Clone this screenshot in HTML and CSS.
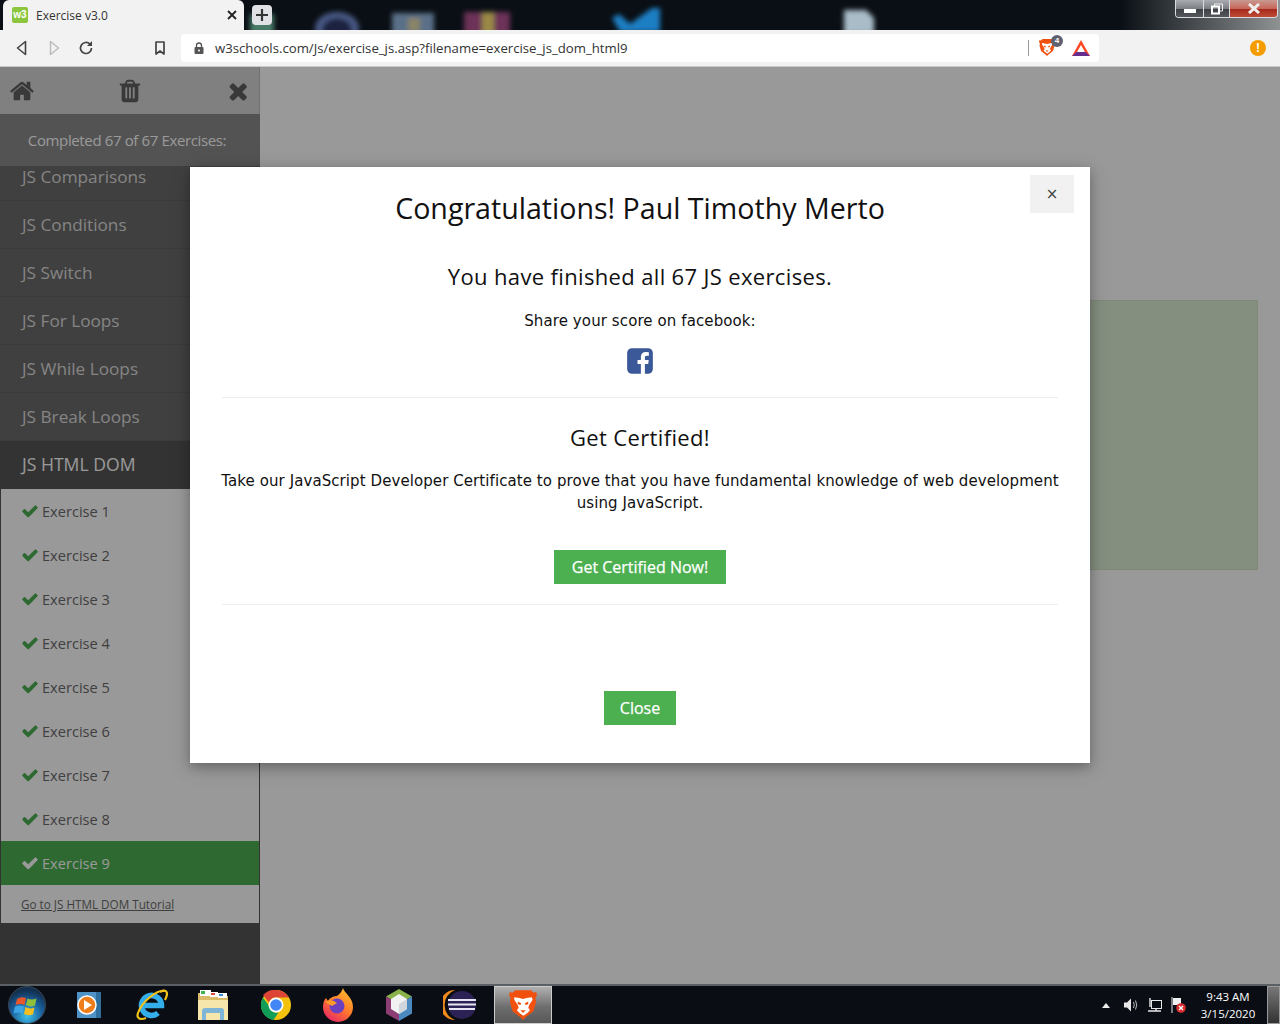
FILE: index.html
```html
<!DOCTYPE html>
<html lang="en">

<head>
    <meta charset="UTF-8">
    <title>Exercise v3.0</title>
    <link rel="stylesheet" href="styles.css">
</head>

<body>
    <svg class="defs" width="0" height="0">
        <symbol id="fa-check" viewBox="0 0 1792 1792"><path d="M1671 566q0 40-28 68l-724 724-136 136q-28 28-68 28t-68-28l-136-136-362-362q-28-28-28-68t28-68l136-136q28-28 68-28t68 28l294 295 656-657q28-28 68-28t68 28l136 136q28 28 28 68z"/></symbol>
        <symbol id="fa-times" viewBox="0 0 1792 1792"><path d="M1298 1322q0 40-28 68l-136 136q-28 28-68 28t-68-28l-294-294-294 294q-28 28-68 28t-68-28l-136-136q-28-28-28-68t28-68l294-294-294-294q-28-28-28-68t28-68l136-136q28-28 68-28t68 28l294 294 294-294q28-28 68-28t68 28l136 136q28 28 28 68t-28 68l-294 294 294 294q28 28 28 68z"/></symbol>
        <symbol id="fa-home" viewBox="0 0 1792 1792"><path d="M1472 992v480q0 26-19 45t-45 19h-384v-384h-256v384h-384q-26 0-45-19t-19-45v-480q0-1 .5-3t.5-3l575-474 575 474q1 2 1 6zm223-69l-62 74q-8 9-21 11h-3q-13 0-21-7l-692-577-692 577q-12 8-24 7-13-2-21-11l-62-74q-8-10-7-23.500t11-21.500l719-599q32-26 76-26t76 26l244 204v-195q0-14 9-23t23-9h192q14 0 23 9t9 23v408l219 182q10 8 11 21.500t-7 23.500z"/></symbol>
        <symbol id="fa-trash" viewBox="0 0 1792 1792"><path d="M704 1376v-704q0-14-9-23t-23-9h-64q-14 0-23 9t-9 23v704q0 14 9 23t23 9h64q14 0 23-9t9-23zm256 0v-704q0-14-9-23t-23-9h-64q-14 0-23 9t-9 23v704q0 14 9 23t23 9h64q14 0 23-9t9-23zm256 0v-704q0-14-9-23t-23-9h-64q-14 0-23 9t-9 23v704q0 14 9 23t23 9h64q14 0 23-9t9-23zm-544-992h448l-48-117q-7-9-17-11h-317q-10 2-17 11zm928 32v64q0 14-9 23t-23 9h-96v948q0 83-47 143.500t-113 60.500h-832q-66 0-113-58.500t-47-141.500v-952h-96q-14 0-23-9t-9-23v-64q0-14 9-23t23-9h309l70-167q15-37 54-63t79-26h320q40 0 79 26t54 63l70 167h309q14 0 23 9t9 23z"/></symbol>
        <symbol id="fa-facebook" viewBox="0 0 1792 1792"><path d="M1376 128q119 0 203.500 84.500t84.500 203.500v960q0 119-84.500 203.500t-203.500 84.500h-188v-595h199l30-232h-229v-148q0-56 23.500-84t91.500-28l122-1v-207q-63-9-178-9-136 0-217.500 80t-81.500 226v171h-200v232h200v595h-532q-119 0-203.500-84.500t-84.500-203.500v-960q0-119 84.500-203.500t203.500-84.500h960z"/></symbol>
        <symbol id="brave" viewBox="0 0 32 36">
            <path fill="#f1500f" d="M7 1h18l3 3 3-1 1 4-2 3 1 4-3 11-9 7-3 3-3-3-9-7-3-11 1-4-2-3 1-4 3 1z"/>
            <path fill="#fff" d="M6 9l6 1 4 1 4-1 6-1 1 3-4 6-1 3 2 3-3 3-4 3-1 0-4-3-3-3 2-3-1-3-4-6z"/>
            <path fill="#f1500f" d="M10 14l4 2-1 2-3-1zM22 14l-4 2 1 2 3-1zM13 24h6l-3 3z"/>
        </symbol>
    </svg>

    <header class="browser">
        <div class="tab-strip">
            <svg class="desktop-blur" width="1280" height="30">
                <defs>
                    <filter id="blur"><feGaussianBlur stdDeviation="2.500"/></filter>
                    <linearGradient id="glass"><stop offset="0" stop-color="#8a8f90" stop-opacity="0"/><stop offset="1" stop-color="#8f9293"/></linearGradient>
                </defs>
                <rect x="1120" width="160" height="30" fill="url(#glass)"/>
                <g filter="url(#blur)">
                    <rect x="250" y="14" width="24" height="20" fill="#4a7a68"/>
                    <ellipse cx="337" cy="28" rx="22" ry="16" fill="#4a5a86"/>
                    <ellipse cx="337" cy="30" rx="15" ry="12" fill="#1b2240"/>
                    <rect x="392" y="13" width="42" height="24" fill="#5a6f88"/>
                    <rect x="408" y="18" width="12" height="14" fill="#8a8466"/>
                    <rect x="464" y="12" width="46" height="24" fill="#6c3058"/>
                    <rect x="482" y="12" width="12" height="22" fill="#9a8a44"/>
                    <path d="M612 18l7-4 11 10 22-16h8v24h-40z" fill="#1f7fc4"/>
                    <path d="M844 10h22l8 8v16h-30z" fill="#a9bcc8"/>
                </g>
            </svg>
            <div class="tab">
                <span class="tab-logo">w3</span>
                <span class="tab-title">Exercise v3.0</span>
                <svg class="tab-close" width="10" height="10" viewBox="0 0 10 10"><path d="M1 1l8 8M9 1l-8 8" stroke="#222" stroke-width="1.8"/></svg>
            </div>
            <div class="new-tab">
                <svg width="14" height="14" viewBox="0 0 14 14"><path d="M7 1v12M1 7h12" stroke="#333" stroke-width="2.2"/></svg>
            </div>
            <div class="window-buttons">
                <span class="win-btn win-min"><i></i></span>
                <span class="win-btn win-max">
                    <svg width="12" height="12" viewBox="0 0 12 12"><path d="M3.500 3V1h8v7H9" fill="none" stroke="#eee"/><rect x="1" y="3.500" width="7" height="7" fill="none" stroke="#fff" stroke-width="2"/></svg>
                </span>
                <span class="win-btn win-close">
                    <svg width="14" height="11" viewBox="0 0 14 11"><path d="M2 1l10 9M12 1L2 10" stroke="#eee" stroke-width="3"/></svg>
                </span>
            </div>
        </div>
        <div class="toolbar">
            <div class="nav-icons">
                <svg class="nav-icon" width="16" height="16" viewBox="0 0 16 16"><path d="M11.500 1.500v13L3.500 8z" fill="none" stroke="#444" stroke-width="1.600" stroke-linejoin="round"/></svg>
                <svg class="nav-icon" width="16" height="16" viewBox="0 0 16 16"><path d="M4.500 1.500v13L12.500 8z" fill="none" stroke="#bbb" stroke-width="1.400" stroke-linejoin="round"/></svg>
                <svg class="nav-icon" width="16" height="16" viewBox="0 0 16 16"><path d="M13.500 8a5.500 5.500 0 1 1-1.600-3.900" fill="none" stroke="#444" stroke-width="1.700"/><path d="M14 1v5H9z" fill="#444"/></svg>
                <svg class="nav-icon bookmark" width="16" height="16" viewBox="0 0 16 16"><path d="M4 2h8v12l-4-3-4 3z" fill="none" stroke="#444" stroke-width="1.700" stroke-linejoin="round"/></svg>
            </div>
            <div class="address-bar">
                <svg width="10" height="12" viewBox="0 0 10 12"><path d="M2.500 5V3.500a2.500 2.500 0 0 1 5 0V5" fill="none" stroke="#555" stroke-width="1.300"/><rect x="0.500" y="5" width="9" height="7" rx="1" fill="#555"/><circle cx="5" cy="8.500" r="1" fill="#fff"/></svg>
                <span class="url">w3schools.com/Js/exercise_js.asp?filename=exercise_js_dom_html9</span>
                <span class="address-sep"></span>
                <span class="shield">
                    <svg width="16" height="19"><use href="#brave"/></svg>
                    <b class="shield-count">4</b>
                </span>
                <svg class="bat" width="18" height="16" viewBox="0 0 18 16">
                    <path d="M9 0l9 16H0z" fill="#ff4724"/>
                    <path d="M9 8l9 8H0z" fill="#662d91"/>
                    <path d="M9 5l4 7H5z" fill="#fff"/>
                </svg>
            </div>
            <span class="update-dot">!</span>
        </div>
    </header>

    <div class="page">
        <aside class="sidebar">
            <div class="side-tools">
                <svg class="side-tool" width="26" height="26"><use href="#fa-home"/></svg>
                <svg class="side-tool" width="26" height="26"><use href="#fa-trash"/></svg>
                <svg class="side-tool close-tool" width="26" height="26"><use href="#fa-times"/></svg>
            </div>
            <div class="side-count">Completed 67 of 67 Exercises:</div>
            <ul class="chapters">
                <li class="chapter cut">JS Comparisons</li>
                <li class="chapter">JS Conditions</li>
                <li class="chapter">JS Switch</li>
                <li class="chapter">JS For Loops</li>
                <li class="chapter">JS While Loops</li>
                <li class="chapter">JS Break Loops</li>
                <li class="chapter open">JS HTML DOM</li>
            </ul>
            <ul class="exercises">
                <li class="exercise"><svg class="tick" width="18" height="18"><use href="#fa-check"/></svg>Exercise 1</li>
                <li class="exercise"><svg class="tick" width="18" height="18"><use href="#fa-check"/></svg>Exercise 2</li>
                <li class="exercise"><svg class="tick" width="18" height="18"><use href="#fa-check"/></svg>Exercise 3</li>
                <li class="exercise"><svg class="tick" width="18" height="18"><use href="#fa-check"/></svg>Exercise 4</li>
                <li class="exercise"><svg class="tick" width="18" height="18"><use href="#fa-check"/></svg>Exercise 5</li>
                <li class="exercise"><svg class="tick" width="18" height="18"><use href="#fa-check"/></svg>Exercise 6</li>
                <li class="exercise"><svg class="tick" width="18" height="18"><use href="#fa-check"/></svg>Exercise 7</li>
                <li class="exercise"><svg class="tick" width="18" height="18"><use href="#fa-check"/></svg>Exercise 8</li>
                <li class="exercise current"><svg class="tick" width="18" height="18"><use href="#fa-check"/></svg>Exercise 9</li>
                <li class="tutorial"><a href="#">Go to JS HTML DOM Tutorial</a></li>
            </ul>
        </aside>
        <main class="content">
            <div class="answer-box"></div>
        </main>

        <div class="overlay"></div>

        <div class="modal">
            <button class="modal-close">×</button>
            <h1>Congratulations! Paul Timothy Merto</h1>
            <h2>You have finished all 67 JS exercises.</h2>
            <p class="share">Share your score on facebook:</p>
            <svg class="fb" width="30" height="30"><use href="#fa-facebook"/></svg>
            <hr>
            <h3>Get Certified!</h3>
            <p class="cert-text">Take our JavaScript Developer Certificate to prove that you have fundamental knowledge of web development using JavaScript.</p>
            <a class="green-btn cert-btn" href="#">Get Certified Now!</a>
            <hr class="second">
            <a class="green-btn close-btn" href="#">Close</a>
        </div>
    </div>

    <footer class="taskbar">
        <svg class="start-orb" width="40" height="40" viewBox="0 0 40 40">
            <defs>
                <radialGradient id="orb" cx="50%" cy="80%" r="70%"><stop offset="0" stop-color="#3fc0e8"/><stop offset="0.6" stop-color="#1a5f9c"/><stop offset="1" stop-color="#12304f"/></radialGradient>
            </defs>
            <circle cx="20" cy="20" r="18.500" fill="url(#orb)" stroke="#3a4450"/>
            <path d="M10 14q4-3 9-1l-1.500 7q-4-2-9 0z" fill="#e8562a"/>
            <path d="M20.500 13.500q4 2 9 0l-1.500 7q-5 2-9-.5z" fill="#8fc03c"/>
            <path d="M8 21.500q4-2 9 0l-1.500 7q-4-2-9 0z" fill="#3ca5e6"/>
            <path d="M18.500 22q4 2.500 9 .5l-1.500 7q-5 1.500-9-.5z" fill="#f5c01f"/>
        </svg>
        <svg class="task-icon wmp" width="28" height="30" viewBox="0 0 28 30">
            <rect x="2" y="2" width="24" height="26" fill="#4f93c6"/>
            <rect x="21" y="2" width="5" height="26" fill="#2e6f9e"/>
            <circle cx="12" cy="15" r="9" fill="#ef7d1a" stroke="#fff" stroke-width="1.500"/>
            <path d="M9 10l8 5-8 5z" fill="#fff"/>
        </svg>
        <svg class="task-icon ie" width="34" height="36" viewBox="0 0 34 36">
            <path d="M10 18.500H27.500A10 10 0 1 0 24 26" fill="none" stroke="#33aeea" stroke-width="5.500"/>
            <path d="M31 4C24 2 8 14 4 26c-2 6 3 7 8 5" fill="none" stroke="#f2c21a" stroke-width="2.200"/>
            <path d="M26 5c4-2 7-2 7 2 0 2-1 4-2 6" fill="none" stroke="#f2c21a" stroke-width="2.200"/>
        </svg>
        <svg class="task-icon explorer" width="34" height="32" viewBox="0 0 34 32">
            <path d="M2 4h12l2 3h16v24H2z" fill="#d9bb6a"/>
            <rect x="4" y="1" width="11" height="6" fill="#fff"/>
            <rect x="5" y="2" width="4" height="3" fill="#3cb54a"/>
            <rect x="14" y="3" width="8" height="5" fill="#fff"/>
            <rect x="15" y="4" width="4" height="2" fill="#d94a38"/>
            <rect x="22" y="4" width="9" height="5" fill="#fff"/>
            <rect x="23" y="5" width="4" height="2" fill="#3a8ad8"/>
            <path d="M2 11h30v20H2z" fill="#f7e6ac"/>
            <path d="M6 31V22q0-3 3-3h16q3 0 3 3v9h-4v-7H10v7z" fill="#7fb6d8"/>
        </svg>
        <svg class="task-icon chrome" width="32" height="32" viewBox="0 0 32 32">
            <circle cx="16" cy="16" r="15" fill="#f4c20d"/>
            <path d="M16 1a15 15 0 0 1 13 7.500H16a7.500 7.500 0 0 0-7 5L3 6a15 15 0 0 1 13-5z" fill="#db4437"/>
            <path d="M3 8.500l6.500 9a7.500 7.500 0 0 0 9 6l-5 7.500A15 15 0 0 1 3 8.500z" fill="#0f9d58"/>
            <circle cx="16" cy="16" r="7.500" fill="#fff"/>
            <circle cx="16" cy="16" r="5.800" fill="#4285f4"/>
        </svg>
        <svg class="task-icon firefox" width="32" height="34" viewBox="0 0 32 34">
            <defs><linearGradient id="fox" x1="0.800" y1="0" x2="0.200" y2="1"><stop offset="0" stop-color="#ffbf2e"/><stop offset="0.500" stop-color="#ff7a2a"/><stop offset="1" stop-color="#e6236a"/></linearGradient></defs>
            <path d="M21 0c1 5 10 9 10 19a15 15 0 0 1-30 0c0-4 1-7 3-9l2 3c2-4 7-5 9-5 3-2 5-5 6-8z" fill="url(#fox)"/>
            <circle cx="15" cy="18" r="7.500" fill="#6a3fc0"/>
            <path d="M3 14c4-3 9-2 12 1l-5 3z" fill="#ff9a2a"/>
        </svg>
        <svg class="task-icon netbeans" width="30" height="34" viewBox="0 0 30 34">
            <path d="M15 1l13 7.500L15 16 2 8.500z" fill="#8ab24a"/>
            <path d="M2 8.500L15 16v17L2 25.500z" fill="#8c3e74"/>
            <path d="M28 8.500L15 16v17l13-7.500z" fill="#4a8ac0"/>
            <path d="M15 6l8 5v10l-8 5-8-5V11z" fill="#f2f2f2"/>
            <path d="M15 16l8-5v10l-8 5z" fill="#cfd6dc"/>
        </svg>
        <svg class="task-icon eclipse" width="34" height="32" viewBox="0 0 34 32">
            <path d="M12 1a15 15 0 0 0 0 30A16 16 0 0 1 12 1z" fill="#f08a1d"/>
            <circle cx="19" cy="16" r="14" fill="#2c2255"/>
            <path d="M5 11h28M5 15.500h28M6 20h26" stroke="#e8e6f2" stroke-width="1.800"/>
        </svg>
        <div class="task-active">
            <svg width="28" height="32"><use href="#brave"/></svg>
        </div>

        <div class="tray">
            <span class="tray-arrow"></span>
            <svg class="tray-speaker" width="16" height="16" viewBox="0 0 16 16"><path d="M1 5.500h3l4-4v13l-4-4H1z" fill="#e8e8e8"/><path d="M10.500 5q1.500 3 0 6M12.500 3.500q2.500 4.500 0 9" fill="none" stroke="#bbb"/></svg>
            <svg class="tray-net" width="16" height="16" viewBox="0 0 16 16"><rect x="4.500" y="3.500" width="10" height="8" fill="none" stroke="#e8e8e8"/><path d="M3 1v9M1 14h13M9 12v2" stroke="#e8e8e8" stroke-width="1.400"/></svg>
            <svg class="tray-flag" width="16" height="16" viewBox="0 0 16 16"><path d="M2 0v16" stroke="#e8e8e8"/><path d="M3 1h8v7H3z" fill="#f0f0f0"/><circle cx="11" cy="11" r="4.800" fill="#d92b2b"/><path d="M9 9l4 4M13 9l-4 4" stroke="#fff" stroke-width="1.400"/></svg>
            <div class="clock">
                <span>9:43 AM</span>
                <span>3/15/2020</span>
            </div>
            <span class="show-desktop"></span>
        </div>
    </footer>
</body>

</html>
```

FILE: styles.css
```css
* {
    box-sizing: border-box;
}

html,
body {
    margin: 0;
    height: 100%;
}

body {
    display: flex;
    flex-direction: column;
    height: 1024px;
    overflow: hidden;
    font-family: "Open Sans", sans-serif;
    background: #fff;
}

.defs {
    position: absolute;
}

/* browser chrome */
.browser {
    flex: none;
    height: 67px;
}

.tab-strip {
    position: relative;
    display: flex;
    height: 30px;
    padding-left: 3px;
    background: #0a0f15;
    overflow: hidden;
}

.desktop-blur {
    position: absolute;
    left: 0;
    top: 0;
}

.tab {
    position: relative;
    display: flex;
    align-items: center;
    width: 241px;
    height: 30px;
    padding: 0 7px 0 9px;
    background: #f2f2f2;
    border-radius: 6px 6px 0 0;
}

.tab-logo {
    width: 16px;
    height: 16px;
    margin-right: 8px;
    background: #8cc63f;
    border-radius: 2px;
    color: #fff;
    font: bold 10px/15px "Liberation Sans", sans-serif;
    text-align: center;
}

.tab-title {
    flex: 1;
    font-size: 12px;
    color: #333;
}

.new-tab {
    position: relative;
    display: flex;
    align-items: center;
    justify-content: center;
    width: 20px;
    height: 20px;
    margin: 5px 0 0 8px;
    background: #dfe1e5;
    border-radius: 4px;
}

.window-buttons {
    position: absolute;
    top: 0;
    right: 2px;
    display: flex;
    height: 18px;
    border: 1px solid #d8dcdf;
    border-top: none;
    border-radius: 0 0 4px 4px;
    overflow: hidden;
}

.win-btn {
    display: flex;
    align-items: center;
    justify-content: center;
    height: 17px;
    background: linear-gradient(#a9adb1, #7c8084 50%, #3e4246 55%, #55595d);
    border-right: 1px solid #d8dcdf;
}

.win-min {
    width: 28px;
}

.win-min i {
    width: 12px;
    height: 4px;
    margin-top: 5px;
    background: #fff;
}

.win-max {
    width: 26px;
}

.win-close {
    width: 47px;
    border-right: none;
    background: linear-gradient(#c89a90, #c8655a 50%, #a52a1c 55%, #c04a36);
}

.toolbar {
    display: flex;
    align-items: center;
    height: 37px;
    padding: 0 14px 1px 14px;
    background: #f2f2f2;
    border-bottom: 1px solid #c9c9c9;
}

.nav-icons {
    display: flex;
    align-items: center;
    gap: 16px;
    width: 167px;
}

.bookmark {
    margin-left: 42px;
}

.address-bar {
    display: flex;
    align-items: center;
    width: 918px;
    height: 28px;
    padding: 0 9px 0 13px;
    background: #fff;
    border-radius: 4px;
}

.url {
    flex: 1;
    margin-left: 11px;
    font-size: 13.2px;
    color: #333;
    white-space: nowrap;
}

.address-sep {
    width: 1px;
    height: 16px;
    margin-right: 10px;
    background: #999;
}

.shield {
    position: relative;
    display: flex;
    margin-right: 17px;
}

.shield-count {
    position: absolute;
    left: 12px;
    top: -3px;
    width: 12px;
    height: 12px;
    background: #5f6070;
    border-radius: 50%;
    color: #fff;
    font: bold 8px/12px "Liberation Sans", sans-serif;
    text-align: center;
}

.update-dot {
    width: 16px;
    height: 16px;
    margin-left: auto;
    background: #f59c00;
    border-radius: 50%;
    color: #fff;
    font: bold 12px/16px "Liberation Sans", sans-serif;
    text-align: center;
}

/* page under the dialog */
.page {
    position: relative;
    flex: 1;
    display: flex;
    min-height: 0;
    background: #fff;
}

.sidebar {
    display: flex;
    flex-direction: column;
    width: 260px;
    background: #555;
}

.side-tools {
    display: flex;
    align-items: center;
    gap: 82px;
    height: 47px;
    padding: 0 9px;
    background: #d5d5d5;
    border-right: 1px solid #bbb;
}

.side-tool {
    flex: none;
    fill: #5f5f5f;
}

.close-tool {
    margin-left: 3px;
}

.side-count {
    height: 52px;
    padding-right: 6px;
    background: #8a8a8a;
    color: #fff;
    font-size: 15px;
    letter-spacing: -0.37px;
    line-height: 52px;
    text-align: center;
}

.chapters,
.exercises {
    margin: 0;
    padding: 0;
    list-style: none;
}

.chapter {
    display: flex;
    align-items: center;
    height: 48px;
    padding-left: 22px;
    background: #6b6b6b;
    border-bottom: 1px solid #636363;
    color: #ddd;
    font-size: 17.2px;
}

.chapter.cut {
    align-items: flex-end;
    height: 35px;
    padding-bottom: 12px;
    line-height: 22px;
}

.chapter.open {
    padding-bottom: 2px;
    background: #555;
    border-bottom: none;
    color: #fff;
    font-size: 17.6px;
}

.exercises {
    background: #fff;
    border-left: 1px solid #555;
    border-right: 1px solid #555;
}

.exercise {
    display: flex;
    align-items: center;
    height: 44px;
    padding-left: 20px;
    color: #6a6a6a;
    font-size: 14.6px;
}

.tick {
    margin-right: 3px;
    fill: #4caf50;
}

.exercise.current {
    background: #4caf50;
    color: #fff;
}

.exercise.current .tick {
    fill: #fff;
}

.tutorial {
    height: 38px;
    padding-left: 20px;
    font-size: 11.7px;
    line-height: 39px;
}

.tutorial a {
    color: #6a6a6a;
}

.content {
    flex: 1;
    padding: 233px 22px 0 40px;
}

.answer-box {
    height: 270px;
    background: #dceed5;
    border: 1px solid #d2e6c6;
}

.overlay {
    position: absolute;
    inset: 0;
    background: rgba(0, 0, 0, 0.4);
}

/* dialog */
.modal {
    position: absolute;
    left: 190px;
    top: 100px;
    display: flex;
    flex-direction: column;
    align-items: center;
    width: 900px;
    height: 596px;
    padding: 0 32px;
    background: #fff;
    color: #111;
    text-align: center;
    box-shadow: 0 4px 10px rgba(0, 0, 0, 0.2), 0 4px 20px rgba(0, 0, 0, 0.19);
}

.modal-close {
    position: absolute;
    top: 8px;
    right: 16px;
    width: 44px;
    height: 38px;
    padding: 0;
    background: #f1f1f1;
    border: none;
    color: #444;
    font: 15px "DejaVu Sans", sans-serif;
}

.modal h1 {
    margin: 18px 0 0;
    font-size: 28.6px;
    font-weight: 400;
    line-height: 46px;
}

.modal h2 {
    margin: 27px 0 0;
    font-size: 22px;
    font-weight: 400;
    letter-spacing: 0.35px;
    line-height: 36px;
}

.share {
    margin: 16px 0 0;
    font: 15px/22px "DejaVu Sans", sans-serif;
    letter-spacing: 0.1px;
}

.fb {
    margin-top: 14px;
    fill: #3b5998;
}

.modal hr {
    align-self: stretch;
    height: 1px;
    margin: 21px 0 0;
    background: #eee;
    border: none;
}

.modal h3 {
    margin: 21px 0 0;
    font-size: 22px;
    font-weight: 400;
    letter-spacing: 0.35px;
    line-height: 36px;
}

.cert-text {
    margin: 15px -4px 0;
    font: 15px/22px "DejaVu Sans", sans-serif;
    letter-spacing: 0.08px;
}

.green-btn {
    display: block;
    height: 34px;
    background: #4caf50;
    color: #fff;
    font-size: 16px;
    line-height: 34px;
    text-decoration: none;
    -webkit-text-stroke: 0.25px #fff;
}

.cert-btn {
    width: 172px;
    margin-top: 36px;
}

.modal hr.second {
    margin-top: 20px;
}

.close-btn {
    width: 72px;
    margin-top: 86px;
}

/* windows taskbar */
.taskbar {
    position: relative;
    flex: none;
    display: flex;
    align-items: center;
    height: 40px;
    background: #0a0e14;
    border-top: 2px solid #5b6065;
}

.start-orb {
    margin-left: 7px;
}

.task-icon {
    flex: none;
}

.wmp {
    margin-left: 28px;
}

.ie {
    margin-left: 31px;
}

.explorer {
    margin-left: 28px;
}

.chrome {
    margin-left: 30px;
}

.firefox {
    margin-left: 30px;
}

.netbeans {
    margin-left: 30px;
}

.eclipse {
    margin-left: 29px;
}

.task-active {
    display: flex;
    align-items: center;
    justify-content: center;
    width: 58px;
    height: 38px;
    margin-left: 17px;
    background: linear-gradient(#b0b0b0, #6e6e6e 55%, #585858);
    border: 1px solid #ccc;
}

.tray {
    display: flex;
    align-items: center;
    height: 38px;
    margin-left: auto;
}

.tray-arrow {
    border: 4px solid transparent;
    border-top: none;
    border-bottom: 5px solid #eee;
}

.tray-speaker {
    margin-left: 13px;
}

.tray-net {
    margin-left: 8px;
}

.tray-flag {
    margin-left: 7px;
}

.clock {
    display: flex;
    flex-direction: column;
    align-items: center;
    width: 74px;
    margin-left: 5px;
    color: #fff;
    font-size: 11.5px;
    line-height: 17px;
}

.show-desktop {
    width: 13px;
    height: 38px;
    margin-left: 2px;
    background: linear-gradient(#777, #333);
    border: 1px solid #999;
}
```
